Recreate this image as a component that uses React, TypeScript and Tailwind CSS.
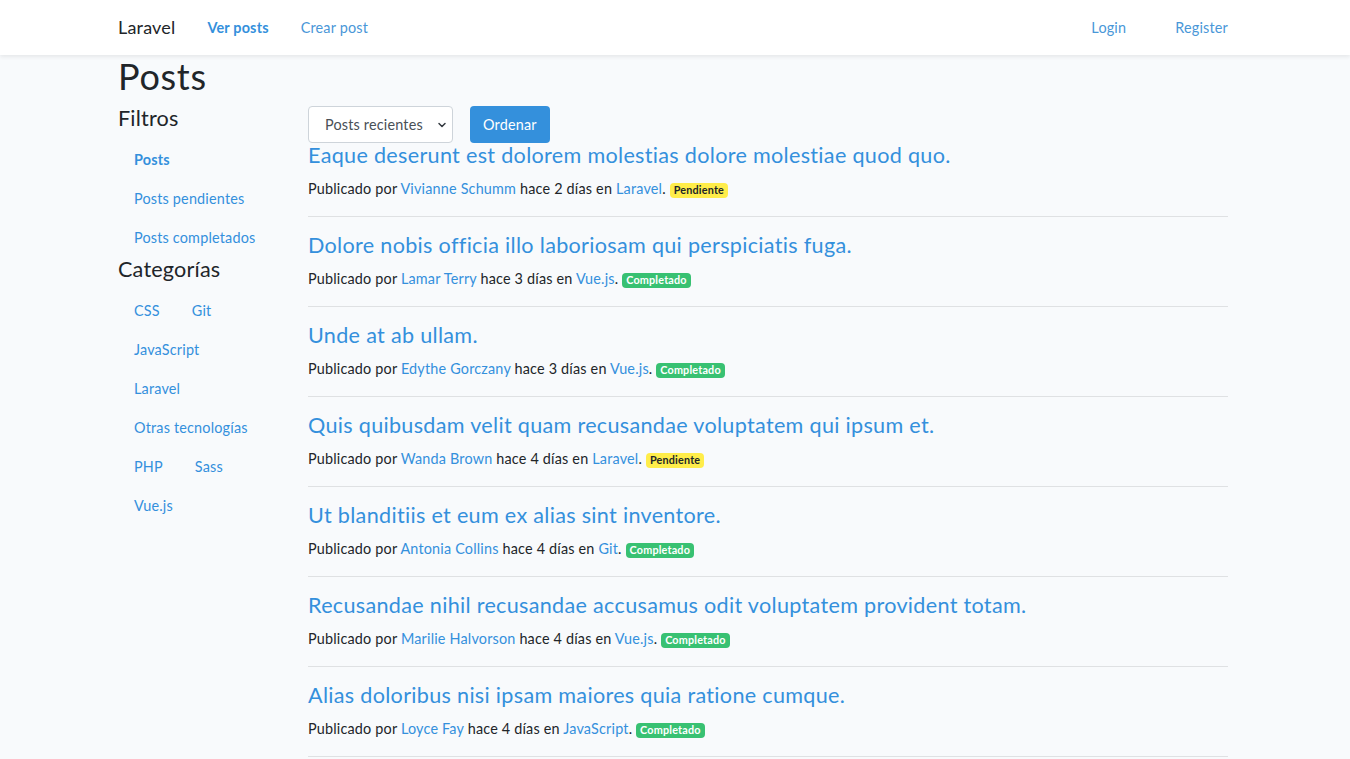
import { ChevronDown } from "lucide-react";

type Post = {
  title: string;
  author: string;
  days: number;
  category: string;
  done: boolean;
};

const posts: Post[] = [
  { title: "Eaque deserunt est dolorem molestias dolore molestiae quod quo.", author: "Vivianne Schumm", days: 2, category: "Laravel", done: false },
  { title: "Dolore nobis officia illo laboriosam qui perspiciatis fuga.", author: "Lamar Terry", days: 3, category: "Vue.js", done: true },
  { title: "Unde at ab ullam.", author: "Edythe Gorczany", days: 3, category: "Vue.js", done: true },
  { title: "Quis quibusdam velit quam recusandae voluptatem qui ipsum et.", author: "Wanda Brown", days: 4, category: "Laravel", done: false },
  { title: "Ut blanditiis et eum ex alias sint inventore.", author: "Antonia Collins", days: 4, category: "Git", done: true },
  { title: "Recusandae nihil recusandae accusamus odit voluptatem provident totam.", author: "Marilie Halvorson", days: 4, category: "Vue.js", done: true },
  { title: "Alias doloribus nisi ipsam maiores quia ratione cumque.", author: "Loyce Fay", days: 4, category: "JavaScript", done: true },
];

const filters = [
  { label: "Posts", active: true },
  { label: "Posts pendientes" },
  { label: "Posts completados" },
];

const categories = ["CSS", "Git", "JavaScript", "Laravel", "Otras tecnologías", "PHP", "Sass", "Vue.js"];

function Badge({ done }: { done: boolean }) {
  return done ? (
    <span className="inline-block rounded-[4px] bg-[#38c172] px-[4px] py-[2px] text-[10.8px] font-bold leading-none text-white align-baseline">
      Completado
    </span>
  ) : (
    <span className="inline-block rounded-[4px] bg-[#ffed4a] px-[4px] py-[2px] text-[10.8px] font-bold leading-none text-[#212529] align-baseline">
      Pendiente
    </span>
  );
}

export default function App() {
  return (
    <div className="min-h-[759px] bg-[#f8fafc] font-['Lato',sans-serif] text-[14.4px] leading-[1.6] tracking-[0.013em] text-[#212529]">
      <nav className="bg-white shadow-[0_2px_4px_rgba(0,0,0,0.075)]">
        <div className="mx-auto flex h-[55px] w-[1140px] items-center pl-[13px] pr-[17px]">
          <a href="#" className="mr-4 text-[18px] text-[#212529]">Laravel</a>
          <a href="#" className="px-4 font-bold text-[#3490dc]">Ver posts</a>
          <a href="#" className="px-4 text-[#4a97d8]">Crear post</a>
          <div className="ml-auto flex items-center gap-[49px]">
            <a href="#" className="text-[#4a97d8]">Login</a>
            <a href="#" className="text-[#4a97d8]">Register</a>
          </div>
        </div>
      </nav>

      <main className="mx-auto w-[1140px] pl-[13px] pr-[17px]">
        <h1 className="mb-2 text-[36px] leading-[1.2] tracking-[0.02em]">Posts</h1>
        <div className="flex">
          <aside className="w-[160px] shrink-0">
            <h4 className="mb-2 text-[21.6px] leading-[1.2]">Filtros</h4>
            <ul className="flex flex-col">
              {filters.map((f) => (
                <li key={f.label}>
                  <a href="#" className={`block px-4 py-2 text-[#3490dc] ${f.active ? "font-bold" : ""}`}>
                    {f.label}
                  </a>
                </li>
              ))}
            </ul>
            <h4 className="mb-2 text-[21.6px] leading-[1.2]">Categorías</h4>
            <ul className="flex flex-wrap">
              {categories.map((c) => (
                <li key={c}>
                  <a href="#" className="block px-4 py-2 text-[#3490dc]">{c}</a>
                </li>
              ))}
            </ul>
          </aside>

          <section className="ml-[30px] w-[920px]">
            <form className="flex items-center">
              <div className="relative">
                <select className="h-[37px] w-[145px] appearance-none rounded-[4px] border border-[#ced4da] bg-white pl-[16px] pr-[28px] text-[14.4px] text-[#495057] outline-none">
                  <option>Posts recientes</option>
                  <option>Posts antiguos</option>
                </select>
                <ChevronDown className="pointer-events-none absolute right-[5px] top-[13px] h-[12px] w-[12px] text-[#343a40]" strokeWidth={3} />
              </div>
              <button type="button" className="ml-[17px] h-[37px] rounded-[4px] bg-[#3490dc] px-[13px] text-white">
                Ordenar
              </button>
            </form>

            {posts.map((p) => (
              <article key={p.title}>
                <h4 className="mb-2 text-[21.6px] leading-[1.2] tracking-[0.014em]">
                  <a href="#" className="text-[#3490dc]">{p.title}</a>
                </h4>
                <p className="mb-4">
                  Publicado por <a href="#" className="text-[#3490dc]">{p.author}</a> hace {p.days} días en{" "}
                  <a href="#" className="text-[#3490dc]">{p.category}</a>. <Badge done={p.done} />
                </p>
                <hr className="mb-4 border-t border-[#dfe1e3]" />
              </article>
            ))}
          </section>
        </div>
      </main>
    </div>
  );
}
